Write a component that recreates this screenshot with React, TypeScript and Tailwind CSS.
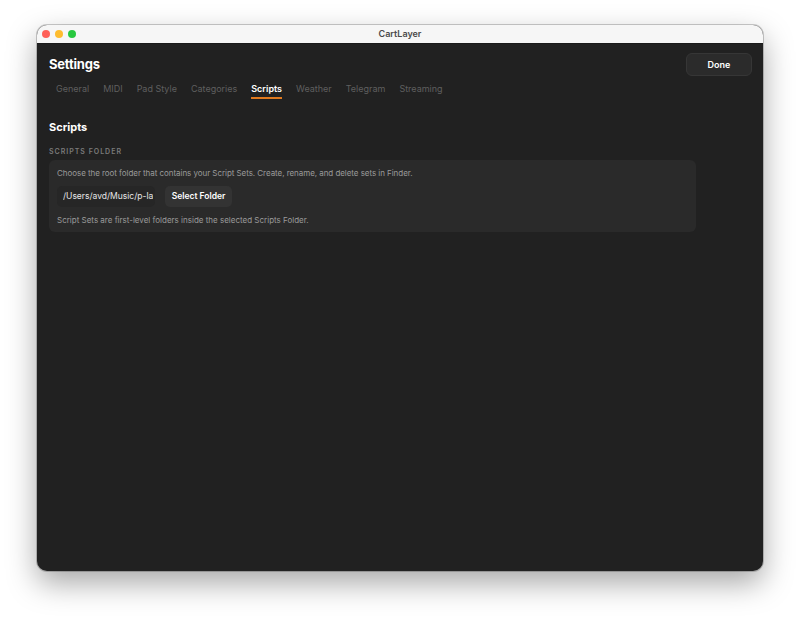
import { useState } from 'react'

const tabs = ['General', 'MIDI', 'Pad Style', 'Categories', 'Scripts', 'Weather', 'Telegram', 'Streaming']

export default function App() {
  const [active, setActive] = useState('Scripts')

  return (
    <div className="w-[800px] h-[620px] bg-white flex justify-center pt-[25px] font-['Inter',sans-serif]">
      <div className="w-[726px] h-[546px] rounded-[10px] overflow-hidden flex flex-col bg-[#212121] shadow-[0_12px_30px_rgba(0,0,0,0.35)] ring-1 ring-black/20">
        {/* title bar */}
        <div className="relative h-[19px] bg-[#f6f6f6] border-b border-[#1a1a1a] flex items-center justify-center">
          <div className="absolute left-[5px] top-[5px] flex gap-[5px]">
            <span className="w-[8px] h-[8px] rounded-full bg-[#fe5f57]" />
            <span className="w-[8px] h-[8px] rounded-full bg-[#febc2e]" />
            <span className="w-[8px] h-[8px] rounded-full bg-[#28c840]" />
          </div>
          <span className="text-[9px] font-semibold text-[#4a4a4a]">CartLayer</span>
        </div>

        <div className="flex-1 px-[12px]">
          {/* header */}
          <div className="flex items-start justify-between pt-[14px]">
            <div>
              <h1 className="text-[13px] font-bold text-white leading-none tracking-[-0.2px]">Settings</h1>
              <div className="flex gap-[14px] pt-[13px] pl-[7px]">
                {tabs.map((t) => (
                  <button
                    key={t}
                    onClick={() => setActive(t)}
                    className={
                      t === active
                        ? 'text-[9px] font-semibold text-white pb-[4px] border-b-2 border-[#e07a20] leading-none'
                        : 'text-[9px] text-[#5f5f5f] pb-[4px] border-b-2 border-transparent leading-none'
                    }
                  >
                    {t}
                  </button>
                ))}
              </div>
            </div>
            <button className="mt-[-5px] mr-[-1px] w-[66px] h-[23px] rounded-[6px] bg-[#2b2b2b] border border-[#363636] text-[9px] font-semibold text-white">
              Done
            </button>
          </div>

          {/* scripts section */}
          <h2 className="mt-[23px] text-[11px] font-bold text-white leading-none">Scripts</h2>
          <div className="mt-[15px] text-[7px] font-semibold tracking-[1px] text-[#7a7a7a] leading-none">SCRIPTS FOLDER</div>
          <div className="mt-[5px] w-[647px] rounded-[6px] bg-[#2a2a2a] px-[8px] pt-[9px] pb-[8px]">
            <p className="text-[8px] text-[#9a9a9a] leading-none tracking-[-0.05px]">
              Choose the root folder that contains your Script Sets. Create, rename, and delete sets in Finder.
            </p>
            <div className="flex items-center gap-[10px] mt-[9px]">
              <div className="w-[98px] h-[21px] rounded-[5px] bg-[#262626] pl-[6px] flex items-center overflow-hidden whitespace-nowrap text-[8.5px] text-[#e6e6e6]">
                <span className="block w-[90px] overflow-hidden">/Users/avd/Music/p-layer</span>
              </div>
              <button className="w-[67px] h-[21px] rounded-[5px] bg-[#333333] text-[8.5px] font-semibold text-white">
                Select Folder
              </button>
            </div>
            <p className="mt-[9px] text-[8px] text-[#9a9a9a] leading-none">
              Script Sets are first-level folders inside the selected Scripts Folder.
            </p>
          </div>
        </div>
      </div>
    </div>
  )
}
